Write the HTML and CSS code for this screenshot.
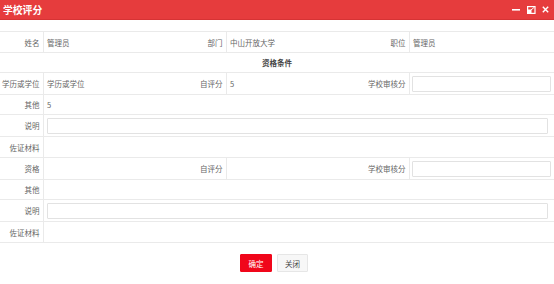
FILE: index.html
```html
<!DOCTYPE html>
<html lang="zh-CN">
<head>
  <meta charset="UTF-8">
  <meta name="viewport" content="width=device-width, initial-scale=1.0">
  <title>学校评分</title>
  <link rel="stylesheet" href="styles.css">
</head>
<body>
  <div class="dialog">
    <div class="titlebar">
      <span class="title">学校评分</span>
      <div class="tools">
        <svg class="tool-min" width="9" height="7" viewBox="0 0 9 7"><rect x="0" y="3" width="8" height="1.6" fill="#fff"/></svg>
        <svg class="tool-max" width="9" height="8" viewBox="0 0 9 8"><rect x="0.6" y="0.6" width="7.4" height="6.8" fill="none" stroke="#fff" stroke-width="1.2"/><rect x="1" y="3.5" width="3.5" height="3.5" fill="#fff"/><path d="M4 4 L7 1.5" stroke="#fff" stroke-width="1"/></svg>
        <svg class="tool-close" width="7" height="7" viewBox="0 0 7 7"><path d="M0.8 0.8 L6.2 6.2 M6.2 0.8 L0.8 6.2" stroke="#fff" stroke-width="1.4"/></svg>
      </div>
    </div>

    <div class="content">
      <div class="form-table">
        <div class="row row-first">
          <div class="cell label">姓名</div>
          <div class="cell value">管理员</div>
          <div class="cell label">部门</div>
          <div class="cell value">中山开放大学</div>
          <div class="cell label">职位</div>
          <div class="cell value">管理员</div>
        </div>
        <div class="row">
          <div class="cell section span-6">资格条件</div>
        </div>

        <div class="row row-input">
          <div class="cell label">学历或学位</div>
          <div class="cell value">学历或学位</div>
          <div class="cell label">自评分</div>
          <div class="cell value">5</div>
          <div class="cell label">学校审核分</div>
          <div class="cell value value-input"><input type="text" class="field"></div>
        </div>
        <div class="row">
          <div class="cell label">其他</div>
          <div class="cell value span-5">5</div>
        </div>
        <div class="row row-input">
          <div class="cell label">说明</div>
          <div class="cell value value-wide span-5"><input type="text" class="field"></div>
        </div>
        <div class="row row-proof">
          <div class="cell label">佐证材料</div>
          <div class="cell value span-5"></div>
        </div>

        <div class="row row-input">
          <div class="cell label">资格</div>
          <div class="cell value"></div>
          <div class="cell label">自评分</div>
          <div class="cell value"></div>
          <div class="cell label">学校审核分</div>
          <div class="cell value value-input"><input type="text" class="field"></div>
        </div>
        <div class="row">
          <div class="cell label">其他</div>
          <div class="cell value span-5"></div>
        </div>
        <div class="row row-input">
          <div class="cell label">说明</div>
          <div class="cell value value-wide span-5"><input type="text" class="field"></div>
        </div>
        <div class="row row-proof">
          <div class="cell label">佐证材料</div>
          <div class="cell value span-5"></div>
        </div>
      </div>

      <div class="actions">
        <button class="btn btn-primary">确定</button>
        <button class="btn">关闭</button>
      </div>
    </div>
  </div>
</body>
</html>
```

FILE: styles.css
```css
* {
  box-sizing: border-box;
}

body {
  margin: 0;
  font-family: "Noto Sans CJK SC", "Noto Sans", sans-serif;
  background: #fff;
  color: #666;
}

.dialog {
  width: 554px;
  height: 284px;
  background: #fff;
}

.titlebar {
  height: 20px;
  background: #e63c3d;
  border-bottom: 1px solid #d63334;
  display: flex;
  align-items: center;
  justify-content: space-between;
  padding: 0 5px 0 3px;
}

.title {
  color: #fff;
  font-size: 9.8px;
  font-weight: bold;
}

.tools {
  display: flex;
  align-items: center;
  gap: 6px;
}

.content {
  padding-top: 11px;
}

.form-table {
  border-top: 1px solid #eaeaea;
}

.row {
  display: grid;
  grid-template-columns: 44px 123px 60px 123px 60px 144px;
  height: 20px;
  border-bottom: 1px solid #eaeaea;
}

.row-first {
  height: 21px;
}

.row-input {
  height: 22px;
}

.row-proof {
  height: 21px;
}

.cell {
  display: flex;
  align-items: center;
  font-size: 7.5px;
  color: #666;
  white-space: nowrap;
}

.label {
  justify-content: flex-end;
  padding-right: 3.5px;
  border-right: 1px solid #eaeaea;
}

.value {
  padding-left: 3px;
}

.value-input {
  padding: 0 3px 0 2px;
}

.value-wide {
  padding: 0 6px 0 3px;
}

.section {
  justify-content: center;
  font-weight: bold;
  color: #444;
}

.span-5 {
  grid-column: span 5;
}

.span-6 {
  grid-column: span 6;
}

.field {
  width: 100%;
  height: 16px;
  border: 1px solid #e2e2e2;
  border-radius: 1px;
  background: #fff;
  padding: 0 4px;
  font-size: 7.5px;
}

.actions {
  display: flex;
  justify-content: center;
  gap: 5px;
  margin-top: 11px;
  padding-right: 6px;
}

.btn {
  height: 18px;
  width: 31px;
  padding: 0;
  border: 1px solid #e6e6e6;
  border-radius: 1px;
  background: #f7f7f7;
  color: #444;
  font-family: inherit;
  font-size: 7.5px;
  cursor: pointer;
}

.btn-primary {
  width: 32px;
  background: #f0061a;
  border-color: #f0061a;
  color: #fff;
}
```
